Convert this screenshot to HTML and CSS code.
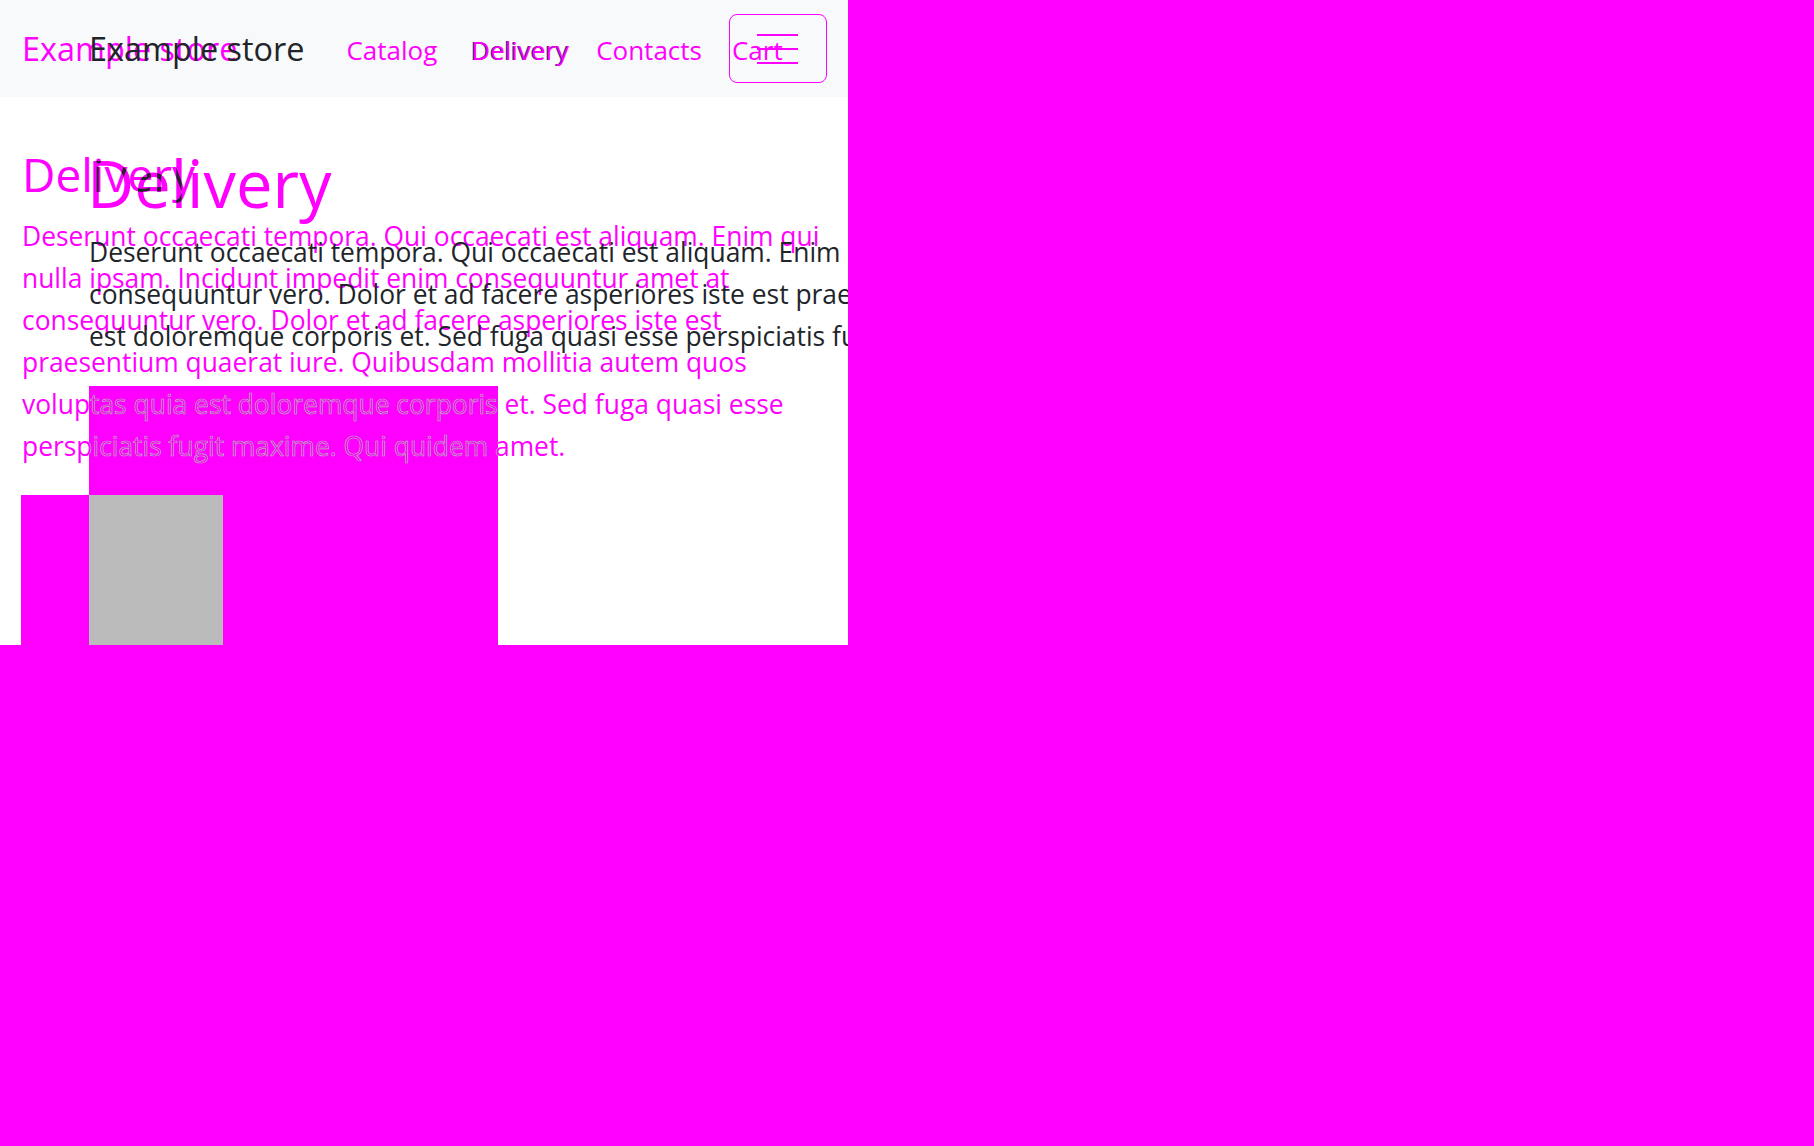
FILE: index.html
```html
<!DOCTYPE html>
<html lang="en">
<head>
<meta charset="utf-8">
<title>Delivery - Example store</title>
<link rel="stylesheet" href="styles.css">
</head>
<body>
<div class="frame">
  <div class="layer-a">
    <nav class="nav-a">
      <span class="brand">Example store</span>
      <ul class="links">
        <li>Catalog</li>
        <li class="active">Delivery</li>
        <li>Contacts</li>
        <li>Cart</li>
      </ul>
    </nav>
    <main class="content-a">
      <h1 class="title">
        <svg class="title-svg" width="826" height="70" viewBox="0 0 826 70">
          <defs>
            <clipPath id="big-clip">
              <text class="t-big" x="65" y="68">Delivery</text>
            </clipPath>
          </defs>
          <text class="t-small" x="0" y="52">Delivery</text>
          <text class="t-big" x="65" y="68">Delivery</text>
          <text class="t-small t-dark" x="0" y="52" clip-path="url(#big-clip)">Delivery</text>
        </svg>
      </h1>
      <p class="para-a">Deserunt occaecati tempora. Qui occaecati est aliquam. Enim qui nulla ipsam. Incidunt impedit enim consequuntur amet at consequuntur vero. Dolor et ad facere asperiores iste est praesentium quaerat iure. Quibusdam mollitia autem quos voluptas quia est doloremque corporis et. Sed fuga quasi esse perspiciatis fugit maxime. Qui quidem amet.</p>
    </main>
  </div>

  <div class="layer-b">
    <div class="nav-b">
      <span class="brand">Example store</span>
    </div>
    <div class="content-b">
      <p class="para-b">Deserunt occaecati tempora. Qui occaecati est aliquam. Enim qui nulla ipsam. Incidunt impedit enim consequuntur amet at consequuntur vero. Dolor et ad facere asperiores iste est praesentium quaerat iure. Quibusdam mollitia autem quos voluptas quia est doloremque corporis et. Sed fuga quasi esse perspiciatis fugit maxime. Qui quidem amet.</p>
    </div>
  </div>

  <div class="toggler"><span></span><span></span><span></span></div>

  <div class="diff-block">
    <p class="ghost">Deserunt occaecati tempora. Qui occaecati est aliquam. Enim qui nulla ipsam. Incidunt impedit enim consequuntur amet at consequuntur vero. Dolor et ad facere asperiores iste est praesentium quaerat iure. Quibusdam mollitia autem quos voluptas quia est doloremque corporis et. Sed fuga quasi esse perspiciatis fugit maxime. Qui quidem amet.</p>
  </div>
  <div class="img-a"></div>
  <div class="img-b"></div>
</div>
</body>
</html>
```

FILE: styles.css
```css
html, body {
  margin: 0;
  background: #ff00ff;
}
body {
  width: 1814px;
  height: 1146px;
  font-family: "Open Sans", "Noto Sans", sans-serif;
}
.frame {
  position: relative;
  width: 848px;
  height: 645px;
  background: #ffffff;
  overflow: hidden;
}

/* layer A : magenta */
.layer-a {
  color: #ff00ff;
}
.nav-a {
  height: 97px;
  box-sizing: border-box;
  background: #f8f9fa;
  display: flex;
  align-items: center;
  padding-left: 22px;
}
.brand {
  font-size: 32.4px;
  line-height: 1;
}
.links {
  display: flex;
  gap: 30px;
  list-style: none;
  margin: 0 0 0 109px;
  padding: 2px 0 0 0;
  font-size: 26px;
  line-height: 1;
}
.links .active {
  margin-left: 4px;
  margin-right: -3px;
  text-shadow: -1px 0 0 #2b2b3b;
}
.content-a {
  padding: 0 22px;
  width: 804px;
}
.title {
  margin: 43px 0 0 0;
  font-weight: 400;
  height: 70px;
}
.title-svg {
  display: block;
  overflow: visible;
}
.t-small,
.t-big {
  font-family: "Open Sans", "Noto Sans", sans-serif;
  font-weight: 400;
  fill: #ff00ff;
}
.t-small {
  font-size: 46px;
}
.t-big {
  font-size: 65px;
}
.t-dark {
  fill: #212529;
}
.para-a {
  font-size: 26.4px;
  line-height: 42px;
  margin: 5px 0 0 0;
}

/* layer B : dark */
.layer-b {
  position: absolute;
  top: 0;
  left: 0;
  width: 1814px;
  color: #212529;
}
.nav-b {
  height: 97px;
  display: flex;
  align-items: center;
  padding-left: 89px;
}
.content-b {
  padding-left: 89px;
  padding-top: 134px;
}
.para-b {
  width: 1640px;
  font-size: 26.4px;
  line-height: 42px;
  margin: 0;
}

/* navbar toggler */
.toggler {
  position: absolute;
  left: 729px;
  top: 14px;
  width: 98px;
  height: 69px;
  box-sizing: border-box;
  border: 1px solid #ff00ff;
  border-radius: 8px;
  display: flex;
  flex-direction: column;
  gap: 12px;
  padding: 19px 0 0 27px;
}
.toggler span {
  display: block;
  width: 41px;
  height: 2px;
  background: #ff00ff;
}

/* diff blocks */
.diff-block {
  position: absolute;
  left: 89px;
  top: 386px;
  width: 409px;
  height: 259px;
  background: #ff00ff;
  overflow: hidden;
}
.ghost {
  position: absolute;
  left: -67px;
  top: -171px;
  width: 804px;
  margin: 0;
  font-size: 26.4px;
  line-height: 42px;
  color: transparent;
  -webkit-text-stroke: 0.7px #b3b3b3;
}
.img-a {
  position: absolute;
  left: 21px;
  top: 495px;
  width: 68px;
  height: 150px;
  background: #ff00ff;
}
.img-b {
  position: absolute;
  left: 89px;
  top: 495px;
  width: 134px;
  height: 150px;
  background: #bababa;
}
```
